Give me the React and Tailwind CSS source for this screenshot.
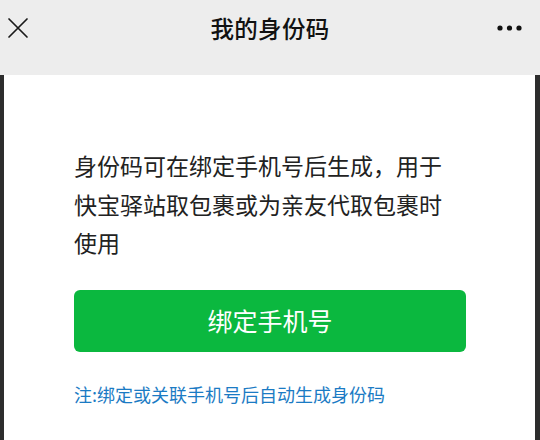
import React from 'react';

const CloseIcon = () => (
  <svg width="22" height="22" viewBox="0 0 22 22" fill="none">
    <path d="M2 2L20 20M20 2L2 20" stroke="#1a1a1a" strokeWidth="1.7" strokeLinecap="round" />
  </svg>
);

const MoreIcon = () => (
  <svg width="28" height="8" viewBox="0 0 28 8">
    <circle cx="4" cy="4" r="2.6" fill="#111" />
    <circle cx="13.5" cy="4" r="2.6" fill="#111" />
    <circle cx="23" cy="4" r="2.6" fill="#111" />
  </svg>
);

const App = () => {
  return (
    <div className="w-[540px] h-[440px] overflow-hidden flex flex-col bg-[#ededed] font-['Noto_Sans_CJK_SC',sans-serif]">
      {/* nav bar */}
      <header className="h-[75px] shrink-0 bg-[#ededed] pb-[17px]">
        <div className="relative h-[58px] flex items-center justify-center">
          <button className="absolute left-[7px] top-[17px]">
            <CloseIcon />
          </button>
          <h1 className="text-[23.5px] font-medium text-[#111] tracking-[0.3px]">我的身份码</h1>
          <button className="absolute right-[16px] top-[24px]">
            <MoreIcon />
          </button>
        </div>
      </header>

      <div className="flex-1 flex">
        <div className="w-[4px] bg-[#2d2d2d]" />
        <main className="flex-1 min-w-0 bg-white pl-[70px] pr-[69px] pt-[71px]">
          <p className="w-[380px] text-[23px] leading-[38.5px] text-[#222]">
            身份码可在绑定手机号后生成，用于快宝驿站取包裹或为亲友代取包裹时使用
          </p>
          <button className="mt-[28px] w-full h-[62px] rounded-[6px] bg-[#0bb83f] text-white text-[25px]">
            绑定手机号
          </button>
          <p className="mt-[29px] text-[18px] leading-[26px] text-[#1b7bc4]">
            注:绑定或关联手机号后自动生成身份码
          </p>
        </main>
        <div className="w-[5px] bg-[#2d2d2d]" />
      </div>
    </div>
  );
};

export default App;
